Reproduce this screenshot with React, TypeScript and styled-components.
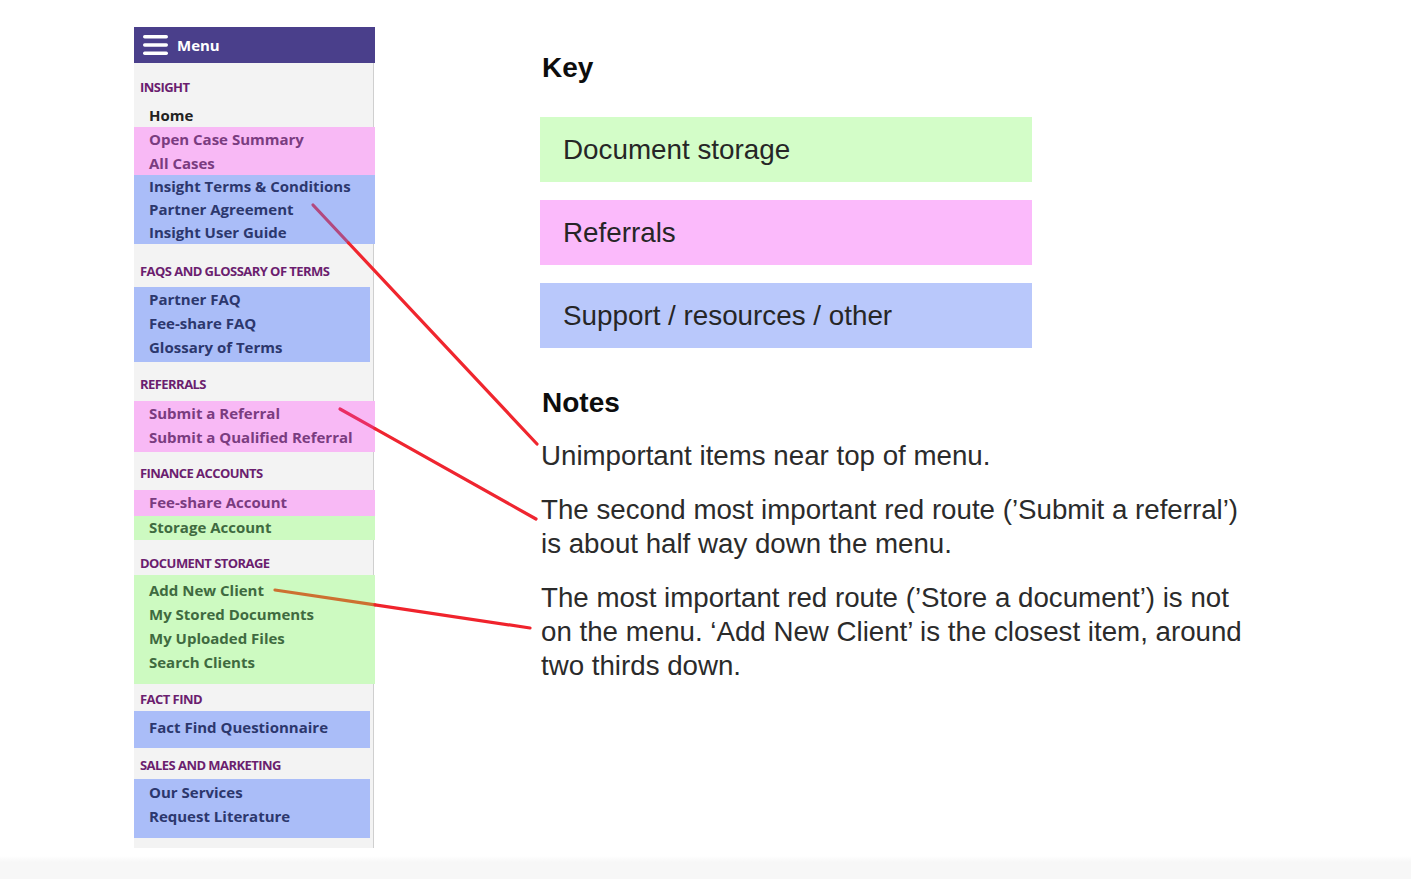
import React from "react";
import styled, { createGlobalStyle } from "styled-components";

const GlobalStyle = createGlobalStyle`
  html, body {
    margin: 0;
    padding: 0;
    background: linear-gradient(to bottom, #ffffff 0, #ffffff 856px, #f7f7f7 862px, #f7f7f7 100%);
    min-height: 879px;
  }
  body {
    font-family: "Liberation Sans", Arial, sans-serif;
  }
`;

type Tone = "pink" | "blue" | "green" | "plain";

interface Group {
  tone: Tone;
  items: string[];
  pt: number;
  pb: number;
  inset?: boolean;
  row?: number;
}

interface Section {
  title: string;
  mt: number;
  mb: number;
  groups: Group[];
}

const SECTIONS: Section[] = [
  {
    title: "INSIGHT",
    mt: 14,
    mb: 6,
    groups: [
      { tone: "plain", items: ["Home"], pt: 0, pb: 0 },
      { tone: "pink", items: ["Open Case Summary", "All Cases"], pt: 0, pb: 0 },
      {
        tone: "blue",
        items: ["Insight Terms & Conditions", "Partner Agreement", "Insight User Guide"],
        pt: 0,
        pb: 0,
        row: 23,
      },
    ],
  },
  {
    title: "FAQS AND GLOSSARY OF TERMS",
    mt: 17,
    mb: 6,
    groups: [
      {
        tone: "blue",
        items: ["Partner FAQ", "Fee-share FAQ", "Glossary of Terms"],
        pt: 0,
        pb: 3,
        inset: true,
      },
    ],
  },
  {
    title: "REFERRALS",
    mt: 12,
    mb: 7,
    groups: [
      {
        tone: "pink",
        items: ["Submit a Referral", "Submit a Qualified Referral"],
        pt: 0,
        pb: 3,
      },
    ],
  },
  {
    title: "FINANCE ACCOUNTS",
    mt: 11,
    mb: 7,
    groups: [
      { tone: "pink", items: ["Fee-share Account"], pt: 0, pb: 2 },
      { tone: "green", items: ["Storage Account"], pt: 0, pb: 2, row: 22 },
    ],
  },
  {
    title: "DOCUMENT STORAGE",
    mt: 13,
    mb: 2,
    groups: [
      {
        tone: "green",
        items: ["Add New Client", "My Stored Documents", "My Uploaded Files", "Search Clients"],
        pt: 3,
        pb: 10,
      },
    ],
  },
  {
    title: "FACT FIND",
    mt: 5,
    mb: 2,
    groups: [
      { tone: "blue", items: ["Fact Find Questionnaire"], pt: 4, pb: 9, inset: true },
    ],
  },
  {
    title: "SALES AND MARKETING",
    mt: 7,
    mb: 4,
    groups: [
      {
        tone: "blue",
        items: ["Our Services", "Request Literature"],
        pt: 1,
        pb: 10,
        inset: true,
      },
    ],
  },
];

const TONE_BG: Record<Tone, string> = {
  pink: "#f8b9f5",
  blue: "#aabdf8",
  green: "#cdfac1",
  plain: "transparent",
};

const TONE_TEXT: Record<Tone, string> = {
  pink: "#7a3c80",
  blue: "#2c376d",
  green: "#3f6a40",
  plain: "#222222",
};

const Page = styled.div`
  position: relative;
  width: 1411px;
  height: 879px;
  overflow: hidden;
  display: flex;
  align-items: flex-start;
`;

const Sidebar = styled.nav`
  margin: 27px 0 0 134px;
  width: 241px;
  display: flex;
  flex-direction: column;
`;

const MenuHeader = styled.div`
  height: 36px;
  background: #4a3f8b;
  display: flex;
  align-items: center;
  gap: 9px;
  padding-left: 9px;
  font-family: "Open Sans", "Noto Sans", sans-serif;
  font-weight: 700;
  font-size: 15px;
  color: #ffffff;
`;

const MenuBody = styled.div`
  width: 239px;
  background: #f3f3f3;
  border-right: 1px solid #cfcfcf;
  padding-bottom: 10px;
  display: flex;
  flex-direction: column;
`;

const SectionTitle = styled.div<{ $mt: number; $mb: number }>`
  margin: ${(p) => p.$mt}px 0 ${(p) => p.$mb}px 6px;
  height: 20px;
  line-height: 20px;
  font-family: "Open Sans", "Noto Sans", sans-serif;
  font-weight: 700;
  font-size: 13px;
  letter-spacing: -0.55px;
  color: #6b1e6f;
`;

const Block = styled.div<{ $tone: Tone; $pt: number; $pb: number; $inset?: boolean }>`
  background: ${(p) => TONE_BG[p.$tone]};
  padding: ${(p) => p.$pt}px 0 ${(p) => p.$pb}px 15px;
  margin-right: ${(p) => (p.$inset ? "3px" : "-2px")};
  display: flex;
  flex-direction: column;
`;

const Item = styled.div<{ $tone: Tone; $row: number }>`
  height: ${(p) => p.$row}px;
  line-height: ${(p) => p.$row}px;
  font-family: "Open Sans", "Noto Sans", sans-serif;
  font-weight: 700;
  font-size: 15px;
  color: ${(p) => TONE_TEXT[p.$tone]};
  white-space: nowrap;
`;

const Content = styled.main`
  margin: 51px 0 0 165px;
  width: 740px;
  display: flex;
  flex-direction: column;
`;

const Heading = styled.h2<{ $mt?: number }>`
  margin: ${(p) => p.$mt ?? 0}px 0 0 2px;
  height: 34px;
  line-height: 34px;
  font-family: "Liberation Sans", Arial, sans-serif;
  font-weight: 700;
  font-size: 28px;
  color: #0d0d0d;
`;

const KeyList = styled.div`
  margin-top: 32px;
  display: flex;
  flex-direction: column;
  gap: 18px;
  width: 492px;
`;

const KeyBox = styled.div<{ $tone: Tone }>`
  height: 65px;
  background: ${(p) =>
    p.$tone === "green" ? "#d3fdc8" : p.$tone === "pink" ? "#fbbafb" : "#b9c8fb"};
  display: flex;
  align-items: center;
  padding-left: 23px;
  font-family: "Liberation Sans", Arial, sans-serif;
  font-size: 27.8px;
  color: #262626;
`;

const Notes = styled.div`
  margin-top: 19px;
  display: flex;
  flex-direction: column;
  gap: 20px;
`;

const Note = styled.p`
  margin: 0 0 0 1px;
  font-family: "Liberation Sans", Arial, sans-serif;
  font-size: 27.7px;
  line-height: 34px;
  color: #2b2b2b;
  white-space: nowrap;
`;

const Overlay = styled.svg`
  position: absolute;
  left: 0;
  top: 0;
  width: 1411px;
  height: 879px;
  pointer-events: none;
`;

const HamburgerIcon = () => (
  <svg width="25" height="22" viewBox="0 0 25 22" aria-hidden="true">
    <rect x="0" y="1" width="25" height="3.4" rx="1.7" fill="#ffffff" />
    <rect x="0" y="9.3" width="25" height="3.4" rx="1.7" fill="#ffffff" />
    <rect x="0" y="17.6" width="25" height="3.4" rx="1.7" fill="#ffffff" />
  </svg>
);

type Seg = { x1: number; y1: number; x2: number; y2: number; c: string };

const SEGMENTS: Seg[] = [
  { x1: 313, y1: 205, x2: 348.6, y2: 243, c: "#b2497f" },
  { x1: 348.6, y1: 243, x2: 537, y2: 444, c: "#f0262e" },
  { x1: 340, y1: 409, x2: 375, y2: 428.6, c: "#ea2d63" },
  { x1: 375, y1: 428.6, x2: 536, y2: 519, c: "#ef2530" },
  { x1: 275, y1: 590, x2: 375, y2: 604.9, c: "#cd7031" },
  { x1: 375, y1: 604.9, x2: 530, y2: 628, c: "#f0232c" },
];

export default function App() {
  return (
    <>
      <GlobalStyle />
      <Page>
        <Sidebar>
          <MenuHeader>
            <HamburgerIcon />
            <span>Menu</span>
          </MenuHeader>
          <MenuBody>
            {SECTIONS.map((s) => (
              <React.Fragment key={s.title}>
                <SectionTitle $mt={s.mt} $mb={s.mb}>
                  {s.title}
                </SectionTitle>
                {s.groups.map((g, gi) => (
                  <Block key={gi} $tone={g.tone} $pt={g.pt} $pb={g.pb} $inset={g.inset}>
                    {g.items.map((it) => (
                      <Item key={it} $tone={g.tone} $row={g.row ?? 24}>
                        {it}
                      </Item>
                    ))}
                  </Block>
                ))}
              </React.Fragment>
            ))}
          </MenuBody>
        </Sidebar>

        <Content>
          <Heading>Key</Heading>
          <KeyList>
            <KeyBox $tone="green">Document storage</KeyBox>
            <KeyBox $tone="pink">Referrals</KeyBox>
            <KeyBox $tone="blue">Support / resources / other</KeyBox>
          </KeyList>
          <Heading $mt={38}>Notes</Heading>
          <Notes>
            <Note>Unimportant items near top of menu.</Note>
            <Note>
              The second most important red route (’Submit a referral’)
              <br />
              is about half way down the menu.
            </Note>
            <Note>
              The most important red route (’Store a document’) is not
              <br />
              on the menu. ‘Add New Client’ is the closest item, around
              <br />
              two thirds down.
            </Note>
          </Notes>
        </Content>

        <Overlay viewBox="0 0 1411 879">
          {SEGMENTS.map((s, i) => (
            <line
              key={i}
              x1={s.x1}
              y1={s.y1}
              x2={s.x2}
              y2={s.y2}
              stroke={s.c}
              strokeWidth={3.2}
              strokeLinecap="round"
            />
          ))}
        </Overlay>
      </Page>
    </>
  );
}
